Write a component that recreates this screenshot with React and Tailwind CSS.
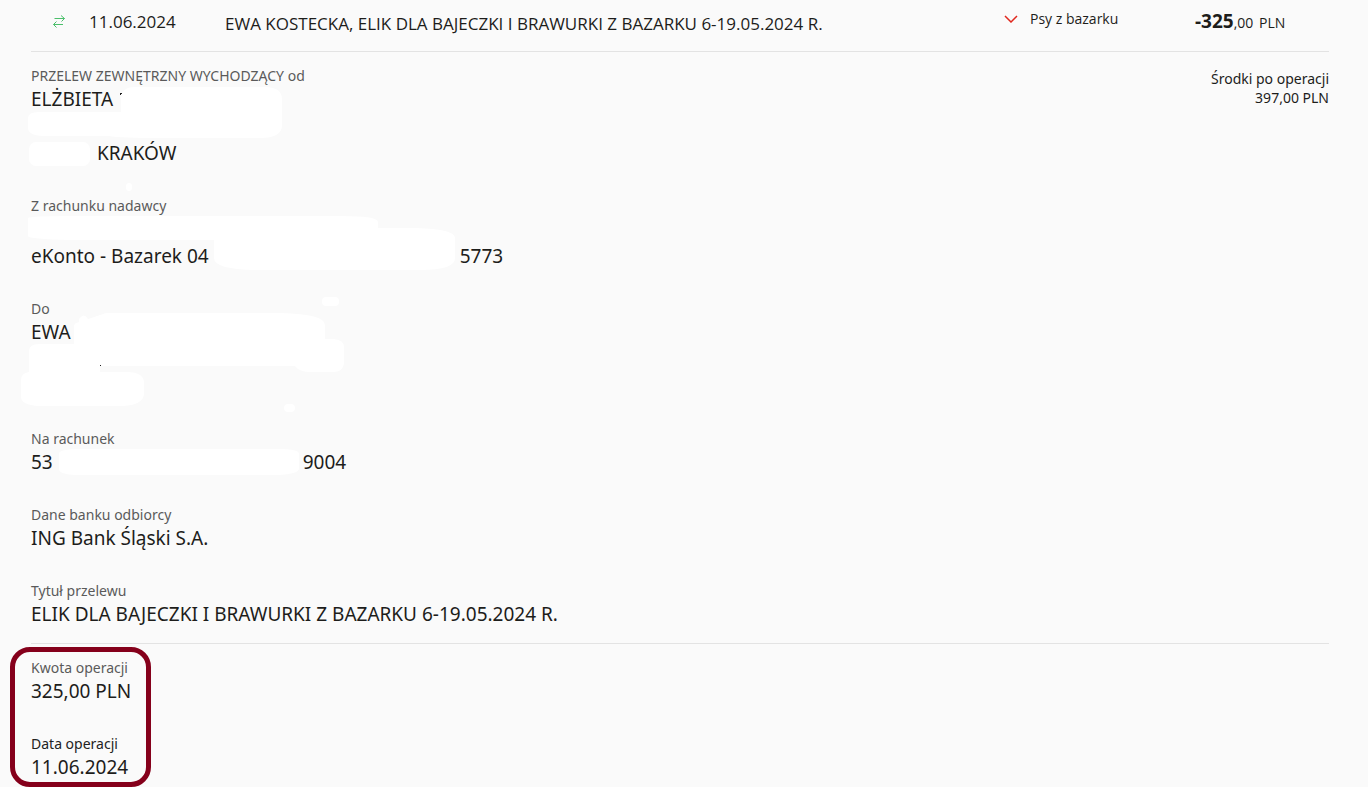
const PARTIES = [
  { label: 'PRZELEW ZEWNĘTRZNY WYCHODZĄCY od', id: 'sender' },
  { label: 'Z rachunku nadawcy', id: 'fromAccount' },
  { label: 'Do', id: 'recipient' },
  { label: 'Na rachunek', id: 'toAccount' },
  { label: 'Dane banku odbiorcy', id: 'bank' },
  { label: 'Tytuł przelewu', id: 'title' },
]

const VALUES = {
  sender: [['ELŻBIETA'], [], ['', 'w-[66px]', 'KRAKÓW']],
  fromAccount: [[], ['eKonto - Bazarek 04', 'w-[251px]', '5773']],
  recipient: [['EWA'], [], []],
  toAccount: [['53', 'w-[250px]', '9004']],
  bank: [['ING Bank Śląski S.A.']],
  title: [['ELIK DLA BAJECZKI I BRAWURKI Z BAZARKU 6-19.05.2024 R.']],
}

// Painted-over private data, drawn relative to the field it hides
const MASKS = {
  sender: (
    <>
      <path d="M90 33 Q90 21 104 21 H236 Q251 22 251 33 V60 Q250 72 230 72 H130 Q90 72 78 70 H12 Q-3 69 -3 62 V52 Q-3 46 8 46 H90Z" />
      <rect x="-2" y="76" width="61" height="24" rx="7" />
      <rect x="95" y="117" width="6" height="8" rx="3" />
      <path d="M89 27h2v1h-1v1h-1z" fill="#222" />
    </>
  ),
  fromAccount: (
    <>
      <path d="M-3 22 Q0 20 40 20 H310 Q347 20 347 26 V32 H385 Q424 33 424 42 V62 Q424 74 390 74 H230 Q183 74 183 62 V44 H40 Q-3 43 -3 40Z" />
    </>
  ),
  recipient: (
    <>
      <path d="M43 27 Q43 24 48 23 V20 Q53 13 57 20 L75 14 H250 Q294 15 294 26 V40 H303 Q313 41 313 48 V65 Q311 73 303 73 H280 Q268 73 264 67 H69 V73 H98 Q113 74 113 84 V95 Q112 106 92 107 H8 Q-10 106 -10 98 V81 Q-10 74 -2 73 V51 Q-1 45 8 45 H43Z" />
      <rect x="291" y="-2" width="17" height="9" rx="4" />
      <rect x="253" y="105" width="11" height="8" rx="4" />
      <rect x="69" y="66" width="1" height="1" fill="#222" />
    </>
  ),
  toAccount: <path d="M28 24 Q30 20 50 20 H248 Q268 20 268 25 V40 Q266 46 240 46 H50 Q28 46 28 40Z" />,
}

function Mask({ children }) {
  return (
    <svg className="absolute left-0 top-0 overflow-visible" width="430" height="100" fill="#fff" aria-hidden="true">
      {children}
    </svg>
  )
}

function Field({ label, lines, mask, dark }) {
  return (
    <div className="relative">
      {mask && <Mask>{mask}</Mask>}
      <dt className={`relative text-sm leading-5 ${dark ? 'text-[#222]' : 'text-[#5a5a5a]'}`}>{label}</dt>
      <dd className="relative text-[19px] leading-[27px]">
        {lines.map(([start, gap, end], i) => (
          <div key={i} className="flex h-[27px]">
            <span>{start}</span>
            {gap && <span className={gap} />}
            <span>{end}</span>
          </div>
        ))}
      </dd>
    </div>
  )
}

function TransferIcon() {
  return (
    <svg width="12" height="14" viewBox="0 0 12 14" fill="none" stroke="#4bbf6b" aria-hidden="true">
      <path d="M1.5 3.5h10M8 .5l3.5 3-3 3M10 9.5H.5M3.5 6.5l-3 3 3 3" />
    </svg>
  )
}

export default function App() {
  return (
    <main className="min-h-screen bg-[#fafafa] pl-[31px] pr-[39px] font-['Noto_Sans',sans-serif] text-[#1d1d1b]">
      <header className="flex h-[52px] items-start border-b border-[#e3e3e3] font-['Open_Sans',sans-serif]">
        <div className="flex w-[194px] items-center gap-6 pl-[22px] pt-[10px] text-[17px] leading-6">
          <TransferIcon />
          <time dateTime="2024-06-11">11.06.2024</time>
        </div>
        <h1 className="flex-1 pt-3 text-[17px] leading-6">
          EWA KOSTECKA, ELIK DLA BAJECZKI I BRAWURKI Z BAZARKU 6-19.05.2024 R.
        </h1>
        <button type="button" className="flex w-[191px] items-center gap-3 pt-2 text-sm leading-[22px]">
          <svg width="14" height="8" viewBox="0 0 14 8" fill="none" stroke="#e0281e" strokeWidth="1.5" aria-hidden="true">
            <path d="M1 1l6 6 6-6" />
          </svg>
          Psy z bazarku
        </button>
        <p className="w-[134px] pt-[7px] text-sm leading-7">
          <strong className="text-[19px] leading-7">-325</strong>,00 <span className="ml-0.5">PLN</span>
        </p>
      </header>

      <section className="flex justify-between border-b border-[#e3e3e3] pb-[15px] pt-[14px]">
        <dl className="flex flex-col gap-[29px]">
          {PARTIES.map(({ label, id }) => (
            <Field key={id} label={label} lines={VALUES[id]} mask={MASKS[id]} />
          ))}
        </dl>
        <p className="pt-[3px] text-right text-sm leading-[19px]">
          Środki po operacji
          <br />
          397,00 PLN
        </p>
      </section>

      <section className="relative pt-[14px]">
        <div className="absolute -left-[21px] top-[3px] h-[140px] w-[141px] rounded-[20px] border-5 border-[#85001b]" />
        <dl className="flex flex-col gap-[29px]">
          <Field label="Kwota operacji" lines={[['325,00 PLN']]} />
          <Field label="Data operacji" lines={[['11.06.2024']]} dark />
        </dl>
      </section>
    </main>
  )
}
